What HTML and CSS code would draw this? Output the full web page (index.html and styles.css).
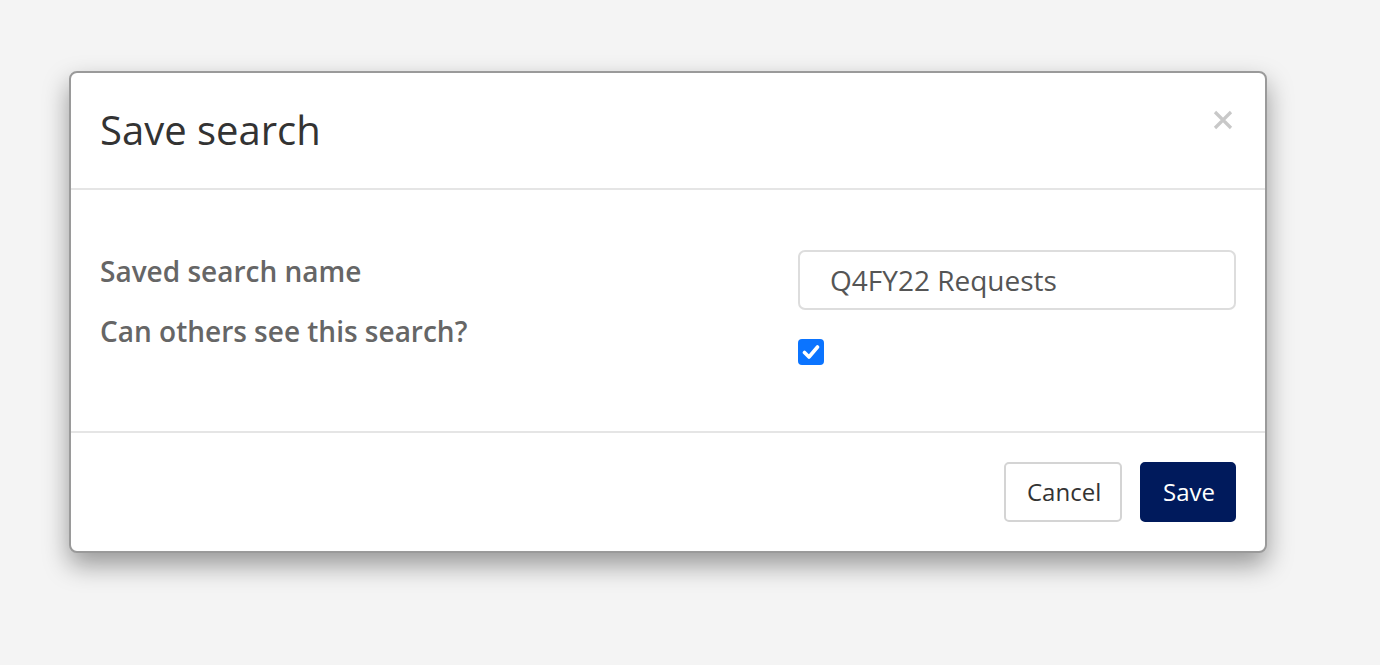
FILE: index.html
```html
<!DOCTYPE html>
<html>
<head>
<meta charset="utf-8">
<link rel="stylesheet" href="styles.css">
</head>
<body>
<div class="modal">
  <div class="modal-header">
    <h2 class="modal-title">Save search</h2>
    <button class="close" aria-label="Close">
      <svg width="20" height="20" viewBox="0 0 20 20"><path d="M2 2 L18 18 M18 2 L2 18" stroke="#c8c8c8" stroke-width="3.2" stroke-linecap="butt"/></svg>
    </button>
  </div>
  <div class="modal-body">
    <div class="labels">
      <div class="label">Saved search name</div>
      <div class="label">Can others see this search?</div>
    </div>
    <div class="fields">
      <input class="text-input" type="text" value="Q4FY22 Requests">
      <span class="check">
        <svg width="18" height="16" viewBox="0 0 18 16"><path d="M2.5 8.5 L7 13 L15.5 3" fill="none" stroke="#fff" stroke-width="3.6" stroke-linecap="round" stroke-linejoin="round"/></svg>
      </span>
    </div>
  </div>
  <div class="modal-footer">
    <button class="btn btn-default">Cancel</button>
    <button class="btn btn-primary">Save</button>
  </div>
</div>
</body>
</html>
```
FILE: styles.css
```css
html, body {
  margin: 0;
  padding: 0;
  background: #f4f4f4;
  font-family: "Open Sans", "Liberation Sans", sans-serif;
}
body {
  padding: 71px 0 0 69px;
  height: 665px;
  box-sizing: border-box;
}
.modal {
  width: 1198px;
  box-sizing: border-box;
  background: #fff;
  border: 2px solid #9a9a9a;
  border-radius: 8px;
  box-shadow: 0 12px 26px rgba(0,0,0,0.38);
}
.modal-header {
  height: 117px;
  box-sizing: border-box;
  border-bottom: 2px solid #e5e5e5;
  display: flex;
  justify-content: space-between;
  align-items: flex-start;
  padding: 0 32px 0 29px;
}
.modal-title {
  margin: 0;
  font-weight: 400;
  font-size: 40px;
  color: #333;
  line-height: 54px;
  padding-top: 30px;
}
.close {
  background: none;
  border: none;
  padding: 0;
  margin-top: 37px;
  width: 20px;
  height: 20px;
  display: block;
}
.close svg {
  display: block;
}
.modal-body {
  height: 243px;
  box-sizing: border-box;
  border-bottom: 2px solid #e5e5e5;
  display: flex;
  justify-content: space-between;
  padding: 60px 29px 0 29px;
}
.labels {
  display: flex;
  flex-direction: column;
  gap: 22px;
  padding-top: 2px;
}
.label {
  font-size: 28px;
  font-weight: 600;
  color: #666;
  line-height: 38px;
}
.fields {
  width: 438px;
  display: flex;
  flex-direction: column;
  align-items: flex-start;
}
.text-input {
  width: 438px;
  height: 60px;
  box-sizing: border-box;
  border: 2px solid #ddd;
  border-radius: 7px;
  padding: 0 30px;
  font-family: "Open Sans", "Liberation Sans", sans-serif;
  font-size: 28px;
  color: #555;
  outline: none;
}
.check {
  margin-top: 29px;
  width: 26px;
  height: 26px;
  border-radius: 4px;
  background: #0b74ff;
  display: flex;
  align-items: center;
  justify-content: center;
}
.modal-footer {
  display: flex;
  justify-content: flex-end;
  gap: 18px;
  padding: 29px 29px 29px 29px;
}
.btn {
  height: 60px;
  box-sizing: border-box;
  border-radius: 5px;
  font-family: "Open Sans", "Liberation Sans", sans-serif;
  font-size: 24px;
  padding: 0 21px;
  line-height: 56px;
}
.btn-default {
  background: #fff;
  border: 2px solid #d4d4d4;
  color: #333;
  width: 118px;
}
.btn-primary {
  background: #001a5c;
  border: 2px solid #001a5c;
  color: #fff;
  width: 96px;
}
```
